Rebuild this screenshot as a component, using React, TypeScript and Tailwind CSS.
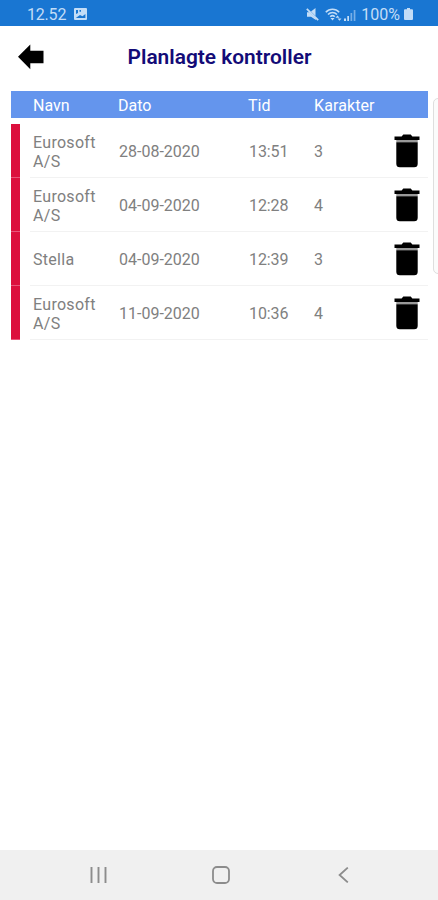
import { useState } from 'react';

interface Control {
  id: number;
  name: string;
  date: string;
  time: string;
  grade: number;
}

const initialControls: Control[] = [
  { id: 1, name: 'Eurosoft A/S', date: '28-08-2020', time: '13:51', grade: 3 },
  { id: 2, name: 'Eurosoft A/S', date: '04-09-2020', time: '12:28', grade: 4 },
  { id: 3, name: 'Stella', date: '04-09-2020', time: '12:39', grade: 3 },
  { id: 4, name: 'Eurosoft A/S', date: '11-09-2020', time: '10:36', grade: 4 },
];

function StatusBar() {
  return (
    <div className="flex h-[26px] shrink-0 items-center bg-[#1976d2] pl-[27px] pr-[25px] pt-[3px] text-[16px] text-[#c3ddf7]">
      <span className="tracking-[-0.2px]">12.52</span>
      <svg className="mb-px ml-[8px]" width="13" height="12" viewBox="0 0 13 12">
        <path fill="currentColor" fillRule="evenodd" d="M1 0h11a1 1 0 0 1 1 1v10a1 1 0 0 1-1 1H1a1 1 0 0 1-1-1V1a1 1 0 0 1 1-1zM1.800 10h9.600V6L8.500 8.200 6 7zM2 2v4l2-1V2zM5.500 2v1.800H7V2z" />
      </svg>
      <div className="ml-auto flex items-center">
        <svg className="mb-px" width="13" height="13" viewBox="0 0 13 13">
          <path fill="currentColor" d="M1 4.200h2.500l2.200 2.200 4.200 4.200V12L5 8.700H1zM5 3.600 9.500 0v8z" />
          <path stroke="currentColor" strokeWidth="1.800" d="M.8.800l11.400 11.400" />
        </svg>
        <svg className="mb-px ml-[6px]" width="17" height="13" viewBox="0 0 17 13">
          <g fill="none" stroke="currentColor" strokeWidth="1.600">
            <path d="M.8 4.200c3.700-4 9.700-4 13.400 0" />
            <path d="M3 6.500c2.600-2.700 6.400-2.700 9 0" />
            <path d="M5.200 8.700c1.500-1.500 3.100-1.500 4.600 0" />
          </g>
          <path fill="currentColor" d="M7.500 12.500 5.500 10h4zM12.500 7.500l2 2.300h-4zM14.500 12.800l-2-2.300h4z" />
        </svg>
        <svg className="ml-[2px]" width="12" height="12" viewBox="0 0 12 12" fill="currentColor">
          <path d="M0 9.500h2V12H0zM3.300 7h1.700v5H3.300z" />
          <path opacity=".55" d="M6.500 4h1.700v8H6.500zM9.700 1h1.700v11H9.700z" />
        </svg>
        <span className="ml-[5px]">100%</span>
        <svg className="mb-px ml-[4px]" width="9" height="12" viewBox="0 0 9 12">
          <path fill="currentColor" d="M3 0h3v1.300h2a1 1 0 0 1 1 1V11a1 1 0 0 1-1 1H1a1 1 0 0 1-1-1V2.300a1 1 0 0 1 1-1h2z" />
        </svg>
      </div>
    </div>
  );
}

function TrashIcon() {
  return (
    <svg width="26" height="34" viewBox="0 0 26 34">
      <path d="M.5 2.600h7.100L9.300.6h7.400l1.700 2h7.100v3.400H.5z" />
      <path fill="#999" d="M2.300 6h21.400v2.300H2.300z" />
      <path d="M2.300 8.300h21.400v21.500a3.500 3.500 0 0 1-3.500 3.500H5.800a3.500 3.500 0 0 1-3.500-3.500z" />
    </svg>
  );
}

export default function App() {
  const [controls, setControls] = useState(initialControls);

  const remove = (id: number) => setControls(controls.filter(c => c.id !== id));

  return (
    <div className="relative flex h-[900px] w-[438px] flex-col overflow-hidden bg-white font-['Roboto',sans-serif]">
      <StatusBar />

      <header className="grid h-[65px] shrink-0 grid-cols-[48px_1fr_48px] items-center pb-[2px]">
        <button className="ml-[18px] cursor-pointer pb-[2px]" aria-label="Tilbage">
          <svg width="26" height="26" viewBox="0 0 26 26">
            <path d="M0 12.800 12.300.5v6.300h13.200v12.500H12.300v6z" />
          </svg>
        </button>
        <h1 className="pl-px text-center text-[20.900px] font-semibold text-[#130b77]">Planlagte kontroller</h1>
      </header>

      <main className="flex-1 pl-[11px] pr-[10px]">
        <div className="grid h-[27px] grid-cols-[85px_130px_66px_1fr] items-center bg-[#6495ed] pl-[22px] pt-[2px] text-[16px] text-white">
          <span>Navn</span>
          <span>Dato</span>
          <span>Tid</span>
          <span className="tracking-[0.1px]">Karakter</span>
        </div>

        <ul className="mt-[6px]">
          {controls.map(control => (
            <li key={control.id} className="flex h-[54px] text-[16px] text-[#808080]">
              <div className="w-[9px] border-b border-[#e8557a] bg-[#dc0f3d]" />
              <div className="ml-[10px] grid flex-1 grid-cols-[86px_130px_65px_1fr_34px] items-center border-b border-[#f2f2f2] pl-[3px]">
                <span className="w-[70px] pt-[2px] leading-[19px] tracking-[0.3px]">{control.name}</span>
                <span className="pt-[2px]">{control.date}</span>
                <span className="pt-[2px] tracking-[-0.1px]">{control.time}</span>
                <span className="pt-[2px]">{control.grade}</span>
                <button className="cursor-pointer" aria-label="Slet" onClick={() => remove(control.id)}>
                  <TrashIcon />
                </button>
              </div>
            </li>
          ))}
        </ul>
      </main>

      {/* edge panel handle */}
      <div className="absolute -right-[4px] top-[98px] h-[176px] w-[9px] rounded-l-[5px] border border-[#dedede] bg-[#fbfbfb]" />

      <nav className="flex h-[50px] shrink-0 items-center bg-[#f0f0f0] text-[#8c8c8c]">
        <svg className="ml-[90px]" width="17" height="16" viewBox="0 0 17 16" stroke="currentColor" strokeWidth="1.900">
          <path d="M1.500 0v16M8.500 0v16M15.500 0v16" />
        </svg>
        <svg className="ml-[105px]" width="18" height="18" viewBox="0 0 18 18" fill="none" stroke="currentColor" strokeWidth="1.800">
          <rect x="1" y="1" width="16" height="16" rx="4" />
        </svg>
        <svg className="ml-[108px]" width="11" height="16" viewBox="0 0 11 16" fill="none" stroke="currentColor" strokeWidth="1.800">
          <path d="M9.800.6 1.600 8l8.200 7.400" />
        </svg>
      </nav>
    </div>
  );
}
